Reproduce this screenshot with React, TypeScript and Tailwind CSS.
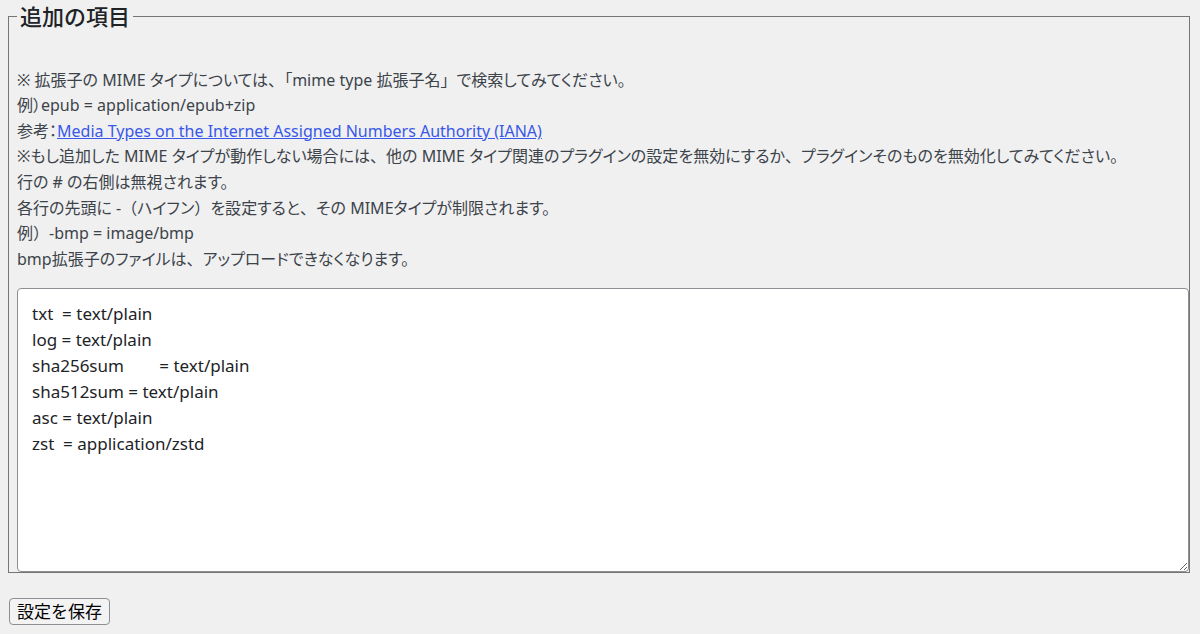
import { useState } from "react";

const initialTypes = [
  "txt  = text/plain",
  "log = text/plain",
  "sha256sum        = text/plain",
  "sha512sum = text/plain",
  "asc = text/plain",
  "zst  = application/zstd",
].join("\n");

// full-width punctuation keeps its full width, the rest of the line uses proportional kana
const fullWidth = "、（）」";

function Jp({ text }: { text: string }) {
  return (
    <>
      {Array.from(text).map((ch, i) =>
        fullWidth.includes(ch) ? (
          <span key={i} className="[font-feature-settings:normal]">
            {ch}
          </span>
        ) : (
          ch
        )
      )}
    </>
  );
}

export default function App() {
  const [types, setTypes] = useState(initialTypes);

  return (
    <div className="min-h-screen bg-[#f0f0f0] pt-[2px] font-['Noto_Sans','Noto_Sans_CJK_JP',sans-serif] text-[#3c434a]">
      <form onSubmit={(e) => e.preventDefault()}>
        {/* Extra MIME types */}
        <fieldset className="ml-2 mr-[10px] border border-[#767676] pl-2 pr-0 pb-0">
          <legend className="px-[3px] text-[22px] leading-[1.3] font-medium text-[#1d2327]">追加の項目</legend>

          <div className="pt-[37px] text-[16px] leading-[1.6] [font-feature-settings:'palt']">
            <p><Jp text="※ 拡張子の MIME タイプについては、「mime type 拡張子名」で検索してみてください。" /></p>
            <p>例）epub = application/epub+zip</p>
            <p>
              参考：
              <a href="#" className="text-[#3858e9] underline">
                Media Types on the Internet Assigned Numbers Authority (IANA)
              </a>
            </p>
            <p><Jp text="※もし追加した MIME タイプが動作しない場合には、他の MIME タイプ関連のプラグインの設定を無効にするか、プラグインそのものを無効化してみてください。" /></p>
            <p>行の # の右側は無視されます。</p>
            <p><Jp text="各行の先頭に -（ハイフン）を設定すると、その MIMEタイプが制限されます。" /></p>
            <p><Jp text="例）-bmp = image/bmp" /></p>
            <p><Jp text="bmp拡張子のファイルは、アップロードできなくなります。" /></p>
          </div>

          <textarea
            value={types}
            onChange={(e) => setTypes(e.target.value)}
            className="mt-4 block h-[284px] w-full rounded border border-[#8c8f94] bg-white px-[14px] pt-3 text-[17px] leading-[26px] text-[#1d2327] outline-none"
          />
        </fieldset>

        <button
          type="submit"
          className="mt-[25px] ml-[9px] h-[27px] rounded border border-[#8c8f94] bg-[#f3f3f3] px-[7px] text-[17px] leading-none text-black"
        >
          設定を保存
        </button>
      </form>
    </div>
  );
}
